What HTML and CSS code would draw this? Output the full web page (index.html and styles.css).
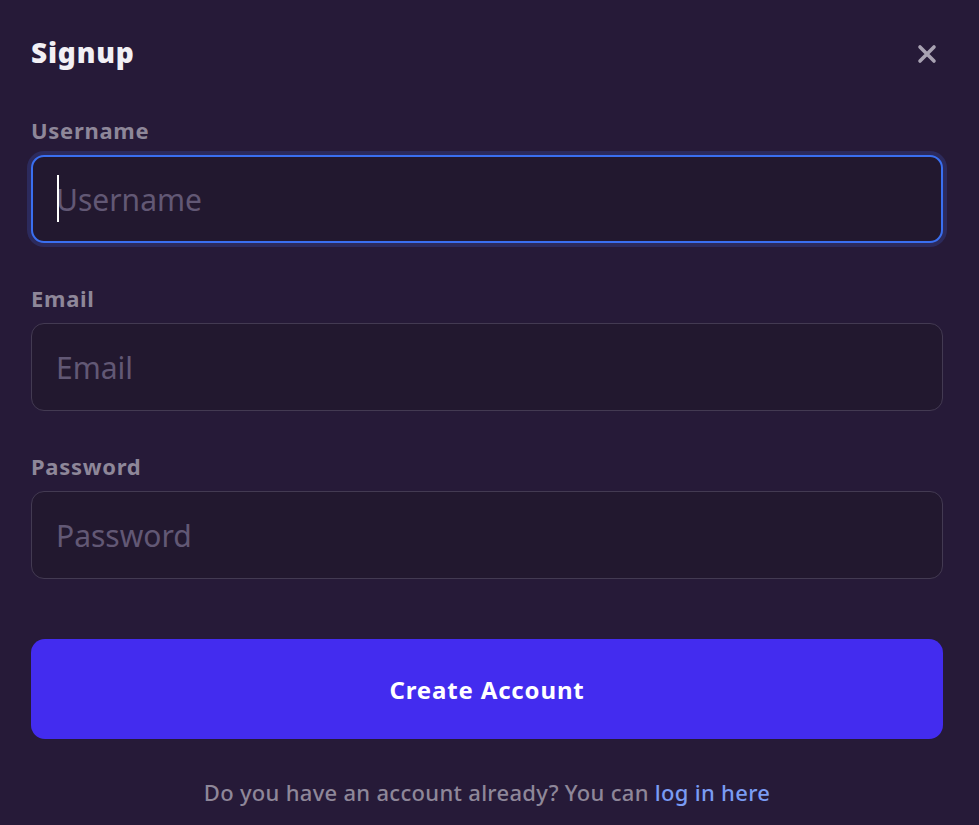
FILE: index.html
```html
<!DOCTYPE html>
<html lang="en">
<head>
<meta charset="utf-8">
<title>Signup</title>
<link rel="stylesheet" href="styles.css">
</head>
<body>
<div class="modal">
  <div class="modal-header">
    <h1 class="title">Signup</h1>
    <button class="close" type="button" aria-label="Close">
      <svg viewBox="0 0 20 20" width="20" height="20" aria-hidden="true">
        <path d="M3 3 L17 17 M17 3 L3 17" stroke="currentColor" stroke-width="3.6" stroke-linecap="round" fill="none"/>
      </svg>
    </button>
  </div>
  <form class="form">
    <div class="field">
      <label class="label" for="username">Username</label>
      <div class="input-wrap is-focused">
        <input class="input" id="username" type="text" placeholder="Username">
        <span class="caret"></span>
      </div>
    </div>
    <div class="field">
      <label class="label" for="email">Email</label>
      <div class="input-wrap">
        <input class="input" id="email" type="email" placeholder="Email">
      </div>
    </div>
    <div class="field field-last">
      <label class="label" for="password">Password</label>
      <div class="input-wrap">
        <input class="input" id="password" type="password" placeholder="Password">
      </div>
    </div>
    <button class="submit" type="button">Create Account</button>
  </form>
  <p class="footer">Do you have an account already? You can <a class="link" href="#">log in here</a></p>
</div>
</body>
</html>
```

FILE: styles.css
```css
* { box-sizing: border-box; }

html, body {
  margin: 0;
  padding: 0;
  background: #261a38;
  font-family: "Noto Sans", "Open Sans", sans-serif;
}

.modal {
  padding: 34px 36px 0 31px;
}

.modal-header {
  display: flex;
  align-items: flex-start;
  justify-content: space-between;
  height: 82px;
}

.title {
  margin: 0;
  font-size: 28px;
  line-height: 36px;
  font-weight: 900;
  color: #f2f0f5;
  letter-spacing: 0.8px;
}

.close {
  margin: 10px 6px 0 0;
  padding: 0;
  border: 0;
  background: transparent;
  color: #a8a2b2;
  width: 20px;
  height: 20px;
  display: flex;
}

.form {
  display: flex;
  flex-direction: column;
}

.field {
  display: flex;
  flex-direction: column;
  margin-bottom: 41px;
}

.field-last {
  margin-bottom: 60px;
}

.label {
  font-size: 22px;
  line-height: 28px;
  font-weight: 700;
  color: #8e8799;
  letter-spacing: 0.7px;
  margin-bottom: 11px;
}

.input-wrap {
  position: relative;
  height: 88px;
  border: 1px solid #433a52;
  border-radius: 13px;
  background: #22182f;
}

.input-wrap.is-focused {
  border: 2px solid #3a6ff0;
  box-shadow: 0 0 0 4px #2c2a5c;
}

.input {
  width: 100%;
  height: 100%;
  border: 0;
  outline: none;
  background: transparent;
  padding: 0 0 0 24px;
  font-family: inherit;
  font-size: 30px;
  color: #f2f0f5;
  caret-color: transparent;
}

.is-focused .input {
  padding-left: 23px;
}

.input::placeholder {
  color: #625875;
  opacity: 1;
}

.caret {
  position: absolute;
  left: 24px;
  top: 18px;
  width: 2px;
  height: 47px;
  background: #ffffff;
}

.submit {
  height: 100px;
  border: 0;
  border-radius: 14px;
  background: #432cef;
  color: #ffffff;
  font-family: inherit;
  font-size: 24px;
  font-weight: 700;
  letter-spacing: 0.85px;
}

.footer {
  margin: 38px 0 0;
  text-align: center;
  font-size: 22px;
  line-height: 30px;
  font-weight: 500;
  letter-spacing: 0.3px;
  color: #8e8799;
}

.link {
  color: #7a9cf3;
  text-decoration: none;
}
```
